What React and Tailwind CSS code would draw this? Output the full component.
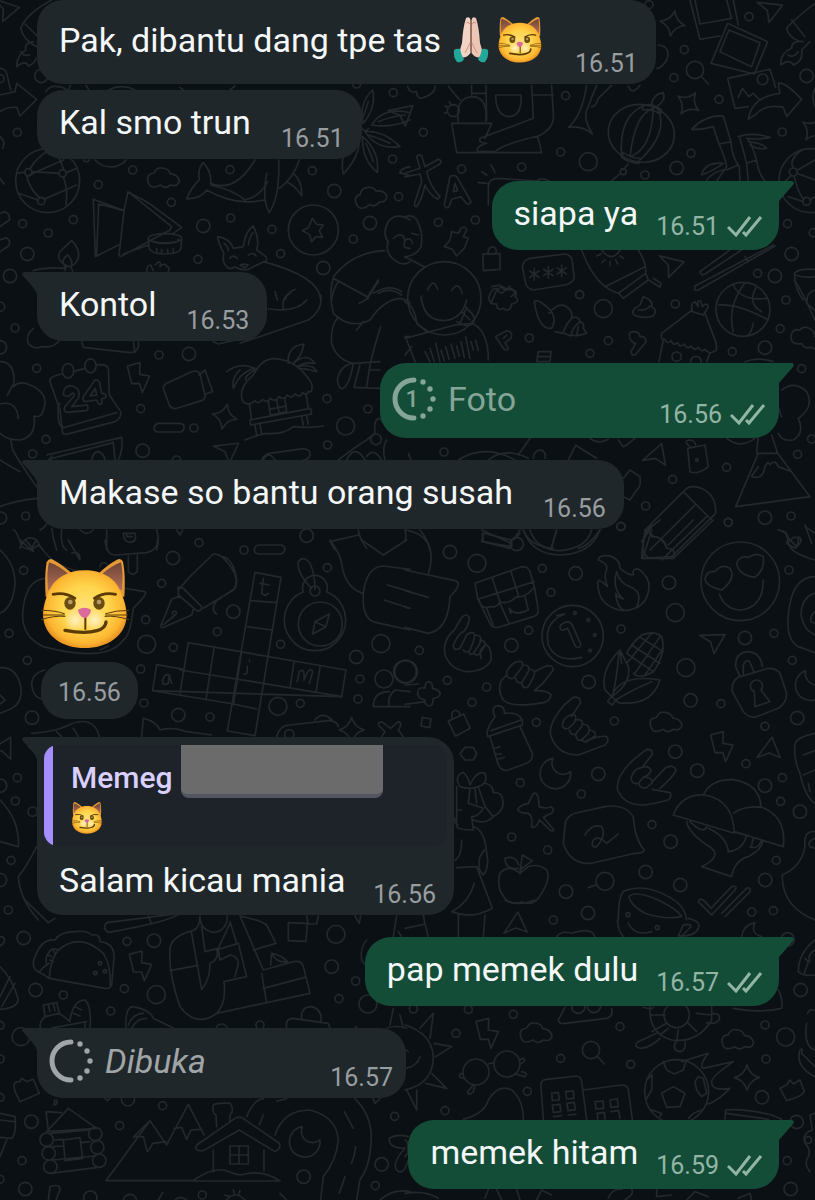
import React from "react";

// small doodles that come back several times, drawn around their own centre
const SHAPES = {
  cloud: "M-46 10Q-52 -14 -28 -16Q-20 -36 2 -30Q18 -26 20 -14Q44 -12 48 8Q44 26 22 20Q4 34 -8 20Q-40 36 -46 10Z",
  bolt: "M-35 -35L3 -45L2 -10L32 -5L10 45L2 18L-22 18Z",
  moon: "M-8 -45A46 46 0 1 0 45 -5A34 34 0 0 1 -8 -45Z",
  sparkle: "M0 -38Q8 -8 38 0Q8 8 0 38Q-8 8 -38 0Q-8 -8 0 -38Z",
  plane: "M-38 -20L38 -22L5 35L-5 0Z",
  search: "M26 0A26 26 0 1 0 -26 0A26 26 0 1 0 26 0M18 18L40 42",
  bag: "M-28 -14L22 -26L32 20L-16 34ZM-14 -18Q-16 -42 0 -42Q12 -38 10 -24",
};

// wallpaper pieces: x / y is the corner of the piece, all the rest in thirds of a pixel
const TILES = [
  {
    x: 0,
    y: 0,
    circles: [
      [52, 397, 12], [398, 510, 12], [295, 554, 12], [514, 607, 12], [68, 671, 12], [145, 699, 12], [220, 659, 12],
      [690, 509, 12], [937, 512, 12], [1196, 590, 12], [692, 654, 12], [816, 688, 12], [1060, 717, 12], [842, 761, 12],
      [594, 778, 12], [1180, 278, 12], [1178, 477, 12], [1070, 252, 12], [0, 236, 12], [124, 228, 20], [82, 762, 20],
      [30, 828, 20], [610, 678, 20], [1003, 573, 20], [1110, 669, 20], [970, 804, 20], [143, 542, 96], [940, 690, 75],
      [85, 517, 11], [188, 520, 11], [124, 603, 11],
    ],
    uses: [["cloud", 490, 535, 0], ["cloud", 1112, 592, -14], ["plane", 15, 30, 20]],
    paths: [
      "M155 0Q80 40 62 85Q70 120 110 140M75 72L112 108",
      "M100 125Q70 130 78 150Q50 165 50 200Q78 178 85 198Q105 190 108 175M62 155Q70 170 90 165",
      "M0 205Q15 205 20 220L32 270M0 285L45 275L50 250L110 298L60 348L50 322Q20 320 0 335",
      "M95 515L178 520M80 528Q90 570 120 594M190 530Q205 570 198 614M55 580L115 600M132 598L230 555M90 507Q110 470 150 450M192 510L170 455M50 520L76 516M198 518L232 505M88 525L190 480",
      "M0 410Q18 425 8 445M0 535L12 552",
      "M137 275Q150 255 175 260Q195 262 205 275M205 270L212 256M258 256L268 272M325 270Q365 250 405 270M540 262L552 272M690 270L705 258",
      "M285 480Q310 505 345 500Q370 492 378 480M250 480Q260 492 268 480",
      "M372 632L280 598L286 770L355 735M372 632L384 575L515 680L510 690L362 770L357 766L372 632M384 575L400 585Q430 598 450 612L545 682L520 700M290 765L296 612L372 632M370 762L445 735",
      "M445 715A50 14 0 1 1 545 715A50 14 0 1 1 445 715L447 745Q455 762 495 762Q540 760 543 745L545 715M456 718A40 10 0 1 0 534 718M470 745V756M485 748V760M503 748V760M520 745V756",
      "M560 597Q575 560 598 540Q592 505 610 488Q635 515 632 550Q705 580 765 480M560 597Q605 595 620 570Q690 610 760 605L795 600M632 555Q700 570 735 600Q780 590 803 545M800 520Q785 600 808 638Q840 590 836 480M838 565Q880 535 898 480M860 545Q890 560 905 588Q908 545 880 520",
      "M1090 370Q1075 310 1118 270Q1130 320 1090 370M1115 375Q1150 320 1230 338M1115 375Q1170 385 1230 360M1095 395Q1150 390 1200 440Q1130 450 1095 395M1088 410Q1140 455 1132 517Q1085 480 1088 410M1078 415Q1080 470 1030 522Q1020 480 1040 450M1135 365Q1170 350 1215 345M1105 405Q1140 415 1170 430M1085 385Q1100 400 1105 385M1098 430Q1115 465 1120 485M1090 350L1105 305",
      "M1200 520Q1200 505 1230 500M1200 518L1230 527",
      "M205 800Q165 780 180 755L215 722Q240 745 235 775Q225 800 205 800M195 800Q180 780 203 765Q222 785 212 800L218 813M195 812L198 800M100 812Q140 800 195 805",
      "M0 640L15 635Q32 645 28 660L0 680M0 720L20 713Q35 725 25 738L0 755",
      "M937 655L950 673L970 675L958 692L968 712L948 710L935 725L928 703L907 692L925 683Z",
      "M440 815Q440 795 452 795L460 812M465 795Q485 775 480 800Q495 785 500 800Q512 800 505 815",
      "M672 760Q655 730 653 710Q690 715 700 745L730 740Q735 695 760 678Q780 720 770 750L798 770Q805 785 785 788Q760 800 745 808Q720 812 705 800Q690 812 680 800Q665 785 672 760M672 730Q685 740 685 752M745 735Q750 705 760 698M690 775Q700 762 712 775M745 765Q760 755 768 768M720 795Q735 790 745 795L735 803ZM790 785Q960 830 962 900",
      "M1230 660Q1190 635 1165 665Q1145 700 1165 725Q1150 765 1200 790Q1220 795 1230 785M1180 715Q1210 690 1215 725Q1205 745 1230 745M1000 830Q1060 755 1155 752M1000 835L1100 890M995 900Q1000 865 1015 845M1100 895L1135 840M1135 880Q1170 860 1205 885",
      "M825 875L832 900M855 900Q860 880 885 868",
    ],
  },
  {
    x: 405,
    y: 0,
    circles: [
      [55, 397, 12], [170, 507, 12], [350, 501, 12], [467, 456, 12], [482, 287, 12], [720, 525, 12], [858, 460, 12],
      [838, 149, 12], [1032, 50, 12], [942, 298, 12], [1132, 396, 12], [100, 667, 12], [211, 660, 12], [732, 14, 12],
      [807, 233, 12], [1148, 671, 12], [1058, 820, 12], [524, 884, 12], [1225, 698, 12], [550, 485, 27], [815, 504, 20],
      [1205, 228, 20], [1160, 762, 20], [1110, 828, 20], [1073, 238, 16], [145, 332, 18], [1218, 542, 96], [655, 515, 9],
      [1165, 516, 12], [1205, 604, 12], [118, 895, 110],
    ],
    uses: [
      ["sparkle", 803, 70, 10], ["sparkle", 850, 310, 35], ["sparkle", 1225, 388, 35], ["search", 870, 210, 0],
      ["plane", 1092, 32, 8], ["plane", 795, 797, 15], ["bag", 258, 782, 12], ["plane", -10, 345, -10],
    ],
    paths: [
      "M8 260Q12 280 35 275Q35 295 50 295Q80 285 88 270L90 258M130 258Q150 285 165 300M200 256V285M243 256L245 360M200 280H243",
      "M160 365Q150 290 205 290Q250 295 242 365M140 370H260L240 415M140 370L155 458H410L398 410M272 285H348Q352 350 310 350Q272 345 272 285M380 256L385 355L225 415Q220 430 245 430Q210 440 218 455H270Q300 430 400 408Q450 385 445 340L440 256M385 285H445M120 318L128 322M118 340L128 336M133 305L138 313",
      "M545 256Q530 350 490 382Q530 375 562 402Q530 350 550 320Q560 290 575 256M560 320Q572 322 580 295Q600 275 620 256",
      "M610 390A98 85 10 1 1 808 410A98 85 10 1 1 610 390M715 318Q640 350 650 470M745 325Q690 340 675 470Q740 450 745 325M760 330Q790 400 705 480M713 318Q740 305 770 330L765 342Q740 325 713 330ZM655 458Q680 475 705 475L702 490Q670 488 650 472ZM740 312Q745 282 775 278Q785 300 755 320M670 492L655 508M645 522L620 543",
      "M760 135Q800 140 785 180Q770 205 755 205M670 258Q680 285 700 262L705 256",
      "M855 0L885 118L945 108M985 0L1000 75M870 0L885 72L980 55L965 0M968 70L1088 125L1048 222L918 190ZM972 90L1065 128L1040 200L945 155Z",
      "M968 235L1095 208L1112 262M968 235L990 325L1030 320M1000 292L1012 265L1032 290L1045 280L1065 300M1030 358Q1040 290 1125 280L1120 250Q1140 245 1190 298L1145 350L1135 322Q1080 310 1050 345Z",
      "M1230 10Q1165 60 1145 85Q1150 110 1180 122M1160 60L1200 110M1195 125Q1160 120 1160 145Q1125 160 1128 195Q1155 175 1165 195Q1195 185 1190 150L1215 125M1150 165Q1165 175 1180 155M1230 265Q1218 290 1230 320",
      "M860 388Q900 345 955 348L978 425L942 432L925 380Q890 390 860 388M942 432Q960 470 965 500L935 543M978 425Q980 470 1003 500L1005 543M1005 415L1025 490L1055 480Q1040 430 1030 420M1000 410Q1040 395 1095 412Q1060 420 1025 415M1030 425Q1075 430 1085 445Q1060 450 1035 435M965 510L1000 495M1025 490L1030 543M1055 482Q1060 520 1080 543M890 525Q900 485 955 490Q930 510 890 525M905 540Q925 515 955 510",
      "M1165 503Q1150 480 1190 450M1175 520L1230 540M1168 530Q1180 580 1196 598M1140 545L1160 525M1150 590L1195 605M1215 600L1230 590M1178 510L1230 480",
      "M0 520L45 505L35 470Q40 460 50 468L60 500L100 478Q112 480 105 492L65 515Q75 560 105 590L98 598Q70 580 60 555Q50 600 35 620Q25 620 30 605L50 545L45 522L0 530",
      "M118 615L135 530Q145 522 155 530L198 605Q192 618 182 608L168 590L140 598L132 620Q122 628 118 615ZM145 575L158 572L150 550Z",
      "M230 515L245 525M258 495L270 518M220 548L245 550M250 615V560Q250 535 280 535L400 543M395 543Q410 530 432 543",
      "M0 650Q30 640 40 670Q55 700 48 740Q35 765 10 768L0 772M0 720Q20 710 22 730M20 700L40 705M0 770L58 800",
      "M118 740L135 720L140 695L160 700L168 685Q180 675 185 690L175 710L190 715L178 745L155 768L142 748Z",
      "M68 870Q85 830 98 868M140 872Q160 840 172 880M50 888L48 900",
      "M375 775L480 762Q500 765 502 785L508 835Q500 850 480 855L385 870Q365 865 362 850L352 800Q355 780 375 775ZM388 805V840M374 813L402 832M402 813L374 832M430 800V835M416 808L444 827M444 808L416 827M470 795V830M456 803L484 822M484 803L456 822",
      "M530 750Q570 860 640 880L722 820Q725 790 700 750M590 750Q620 790 645 750M575 768L588 762M590 788L600 780M615 798V785M638 792L632 780M655 775L645 768M640 878L655 895L730 840L722 820M728 838L765 862L768 850L745 835M600 860L720 800",
      "M975 750L885 815Q890 830 900 822L1010 750M1105 735L870 858Q865 875 880 870L1110 738M1020 770L1030 785",
      "M1230 808Q1180 805 1168 820Q1170 870 1195 900M1170 825Q1200 835 1230 830",
      "M260 860L285 855L295 868L320 865L330 880L318 890",
    ],
  },
  {
    x: 0,
    y: 300,
    circles: [
      [45, 84, 12], [0, 142, 20], [477, 165, 12], [567, 162, 20], [110, 205, 12], [981, 296, 12], [422, 326, 12],
      [582, 384, 12], [1104, 327, 12], [138, 418, 12], [98, 462, 12], [983, 435, 12], [1037, 378, 27], [428, 452, 20],
      [1128, 418, 16], [77, 648, 12], [597, 728, 12], [2, 654, 18], [920, 707, 20], [0, 20, 14], [530, 480, 12],
    ],
    uses: [["bolt", 417, 233, 0], ["sparkle", 674, 350, 12], ["plane", 680, 455, -5]],
    paths: [
      "M100 85Q75 105 85 130Q100 150 125 140Q160 145 178 122M245 125L250 142L390 158Q420 155 415 125M400 125L405 158M640 125L655 132L700 122",
      "M962 -15Q970 30 925 60L720 130M805 27Q890 38 920 0M850 25Q845 -10 870 -20",
      "M185 222Q145 230 150 245L180 330L188 400Q195 405 210 400L345 365Q365 355 362 335L328 285L325 205Q320 190 288 195M220 215L255 205M180 310L175 320Q170 385 195 382L350 338M190 200A16 20 0 1 1 218 225A16 20 0 1 1 190 200M258 185A16 20 0 1 1 285 210A16 20 0 1 1 258 185",
      "M190 285Q190 255 215 258Q245 265 235 295L215 320L262 315Q268 330 258 332L200 337Q188 332 195 320L222 288Q225 270 205 290ZM250 290L285 240Q300 240 300 255L305 280Q320 280 318 292L305 297V312Q295 318 290 300L255 305Q245 300 250 290ZM270 288L290 285L286 265Z",
      "M500 250L575 215Q595 210 600 222L615 285Q618 295 605 302L530 325Q515 328 508 315L490 265Q490 255 500 250ZM597 225L615 210L638 275L615 283",
      "M680 215Q720 185 765 205Q720 215 700 265Q695 230 720 210M765 210Q730 230 738 240M725 290Q720 260 760 225Q790 165 840 178Q895 185 935 250Q940 280 925 275Q920 290 908 278Q900 295 885 282Q875 298 862 285Q850 302 838 290Q825 308 812 295Q800 312 788 298Q775 315 765 302Q745 318 740 310Q725 310 725 290M865 190Q860 140 912 132Q905 170 880 190Q920 155 945 190Q920 185 890 200Q940 190 950 215Q915 205 895 205",
      "M748 310L755 360M918 280L925 325M750 360L932 325L935 342L752 375ZM805 305L812 345L860 335L855 295M830 300L838 340M808 328L858 318M765 375L770 405M780 372L785 402M905 350L910 375M920 348L925 372M735 420Q770 405 800 400Q850 405 880 380Q930 385 970 378",
      "M475 370H540Q555 372 552 384Q550 395 540 396H475Q462 395 462 383Q464 372 475 370Z",
      "M0 185Q45 185 42 250L22 285M40 260Q60 240 90 255Q150 280 130 330Q125 355 102 348Q110 410 60 420Q20 420 0 400M0 312Q50 300 55 355M32 418L38 450Q60 490 110 560M0 480Q30 500 60 515M0 620Q50 600 110 595",
      "M140 465L365 412Q370 450 355 480M145 478L340 428L345 480M275 480Q280 455 295 455Q310 460 315 478M155 468L150 482",
      "M785 480Q790 465 810 460L910 446Q935 450 930 465Q925 480 910 480M790 480Q805 450 825 480",
      "M1000 -65Q985 -20 1000 40Q1050 90 1110 60Q1150 0 1200 -5Q1225 0 1230 10M1015 50Q990 80 995 130Q1010 180 1060 190L1140 185M1142 80Q1120 150 1110 195M1000 -65L1105 -8L1135 -55M1105 -5L1078 10M1070 90L1090 65M1120 -20Q1170 -50 1205 -25",
      "M1060 190Q1020 195 1012 240Q1015 270 1030 265Q1050 250 1060 190M1080 195L1062 262L1140 265M1110 197L1100 260M1140 210H1110",
      "M1015 480Q1060 445 1100 420L1125 400Q1120 355 1140 355L1160 380M1040 480Q1065 430 1095 480M1100 470Q1120 440 1145 480M1160 420Q1145 440 1155 480",
      "M120 690Q140 680 145 660M155 685Q160 720 170 750M185 690Q180 740 200 750M240 690Q260 710 280 690M320 690V750M470 690Q480 720 470 750M370 700H405Q412 725 390 727Q370 725 370 700M380 700V710H396M65 740Q50 690 40 690M60 745Q75 700 110 720L90 750M65 740Q90 755 115 735L130 750M530 690L540 705L548 690M1075 690Q1080 720 1100 745M1075 705L990 725L1005 750",
    ],
  },
  {
    x: 405,
    y: 300,
    circles: [
      [524, -16, 12], [811, 12, 12], [1143, 0, 12], [1126, 86, 12], [982, 155, 12], [1190, 206, 12], [373, 114, 12],
      [610, 122, 12], [555, 160, 12], [117, 456, 12], [965, 502, 12], [803, 538, 12], [722, 618, 12], [970, 667, 12],
      [1158, 648, 12], [648, 680, 12], [1178, 463, 12], [1220, 417, 12], [595, 26, 27], [1080, 143, 20], [1080, 653, 20],
      [1014, 28, 81], [815, 170, 14], [873, 185, 16], [876, 480, 4],
    ],
    uses: [["plane", 755, 472, -40], ["cloud", 1205, 115, 20]],
    paths: [
      "M50 0Q60 60 115 62Q170 60 185 0M155 65Q185 85 205 70Q215 50 190 30L180 20M165 70L185 22M170 35L195 60",
      "M0 5Q30 20 35 70L65 95M0 115L150 75L200 70Q250 90 250 180M5 120L30 185M0 165L20 140M60 155L75 185M75 145L88 185M92 130L105 185M108 150L118 182M122 140L132 178M138 132L150 175M155 138L163 168M168 125L178 172M182 110L195 175M198 125L205 150M212 120L220 152M0 110L20 110",
      "M260 5L275 -30L290 -20L315 -42M252 -10Q265 -45 280 -30Q290 -50 305 -30Q345 -35 330 -10Q350 5 320 12Q315 40 295 25Q275 35 275 12Q250 15 252 -10Z",
      "M275 108L305 92Q325 95 318 115L300 128L310 145Q305 155 295 145L275 115Q270 110 275 108ZM295 115L305 105",
      "M388 5Q395 -5 425 20Q460 50 440 85Q400 90 388 5ZM432 40Q460 5 485 20Q505 35 500 55Q480 75 475 100L450 95M500 55Q520 45 525 65Q500 85 498 108L475 100M525 65Q540 70 535 85L545 100Q520 110 498 105M520 80L515 108",
      "M700 50Q675 45 688 25Q700 20 705 15L715 -10Q745 0 740 20Q760 30 745 48Q725 55 700 50M700 30Q725 32 735 18M415 155H438L435 185H395L400 155ZM400 170H435",
      "M675 115Q668 95 685 95Q705 95 705 110L715 110Q728 120 720 130L690 165Q680 168 678 155L692 130Q680 128 675 115Z",
      "M862 30L770 100Q765 120 780 118Q785 135 798 122Q805 140 818 128Q825 145 838 132Q848 150 858 138Q868 155 880 142Q890 158 900 148Q915 165 925 155Q940 155 932 125L900 40M862 35Q855 10 870 5L880 20Q875 -5 888 5L892 20Q905 5 910 20L895 45ZM775 120L762 185M915 160L905 185",
      "M940 15Q1000 10 1090 60M1020 -52Q965 20 985 95M985 -45Q1010 5 1085 -5M1045 70Q1040 100 1025 108M1055 -40Q1025 10 1070 35",
      "M1130 270Q1170 240 1205 275Q1230 320 1180 355Q1200 400 1165 420Q1130 425 1120 400M1130 350L1120 320M1230 60Q1195 -20 1168 -60M1230 -30Q1205 -25 1205 10L1230 30M1020 185Q1060 170 1105 185",
      "M855 440Q835 425 850 420Q870 420 872 435M848 445L900 435L910 500Q880 525 855 515ZM960 410Q1000 450 1050 415M1060 410L1055 460H1118L1100 405M1060 460L992 620L1215 590L1115 455M1040 528L1060 500M1040 530Q1075 540 1080 500Q1090 480 1095 495Q1110 475 1120 500L1160 515",
      "M160 480Q240 430 330 480M250 480Q300 440 370 475M375 415L340 465M385 475Q385 450 410 450Q425 460 420 475M10 460L18 480M490 480L512 436L575 475M660 438L690 415M640 420L655 440M555 415Q580 435 610 418",
      "M655 535L675 510L705 530Q710 560 695 570L675 600L655 590",
      "M835 575Q850 555 880 562Q935 580 932 640L800 770M835 575L720 690L710 775L805 770M835 575L920 660M870 615L735 750M905 650L770 780M740 690L715 770M720 690Q740 700 745 710Q775 710 785 740",
      "M0 690Q65 700 75 750M235 700L320 720V740L230 725ZM355 690Q375 740 445 745M585 690Q550 740 520 745M455 690L440 740M345 690L325 720M1120 690Q1160 700 1145 730L1170 745Q1200 720 1180 710M1200 680L1230 700",
    ],
  },
  {
    x: 0,
    y: 540,
    circles: [
      [71, 91, 12], [27, 280, 12], [82, 361, 12], [485, 130, 12], [437, 239, 12], [520, 322, 12], [422, 387, 12],
      [432, 489, 12], [652, 275, 12], [842, 313, 12], [982, 83, 12], [1080, 417, 12], [1074, 477, 12], [901, 490, 12],
      [630, 531, 12], [52, 713, 12], [46, 783, 12], [33, 961, 12], [25, 1110, 12], [732, 30, 12], [519, 54, 20],
      [700, 215, 20], [535, 525, 20], [96, 533, 20], [1069, 351, 20], [440, 313, 27], [834, 499, 27], [1143, 311, 27],
      [0, 737, 20], [0, 1020, 20], [945, 153, 15], [961, 252, 66], [1152, 417, 27], [1215, 395, 34], [868, 583, 14], [98, 815, 14],
    ],
    uses: [["sparkle", 1055, 570, 0], ["plane", 10, 630, -30]],
    paths: [
      "M0 30Q45 70 45 130Q40 200 0 220M205 0L240 60M215 40Q240 30 240 60M60 0L100 35Q90 10 75 0M110 0Q150 80 245 95M315 0Q320 45 345 45L440 38Q475 30 472 0M385 48V95Q398 110 412 95V45M300 80Q305 60 320 72",
      "M375 145L435 155Q445 160 400 205Q390 290 370 300Q320 370 130 320Q65 290 68 220Q75 120 135 115M300 330L325 318",
      "M535 150L570 110L640 42Q665 38 695 85Q720 120 700 150L610 205M665 50Q690 50 705 95Q715 125 705 145L650 182Q630 210 650 222M535 150Q530 135 550 145L605 200Q605 215 590 212L535 165ZM540 168L515 178L482 258Q485 268 500 258L575 225L580 208M490 255L525 225A6 6 0 1 0 518 222",
      "M765 97L843 112L765 587L682 573ZM755 182L830 188M742 260L815 270M565 308L540 460M642 325L618 478M565 308L1038 390L1025 470L458 452M882 368L870 443M960 382L948 458",
      "M470 374L552 388M540 390L790 430L1025 470M725 335L700 495M470 374L458 452L700 492L770 507",
      "M790 115L785 160Q795 170 805 160M780 130L808 135M742 378V395Q740 405 732 402M748 360L749 364M488 425Q490 400 508 405L505 430Q485 440 488 420M508 405L515 430M892 425L898 395Q915 380 912 420Q930 375 938 395L928 430",
      "M910 155A37 37 0 1 1 980 155A92 92 0 1 1 910 155M935 145Q890 100 895 65Q910 45 930 70Q945 100 945 148M988 222L978 260L938 282L945 245ZM945 245L978 260",
      "M0 383Q50 380 62 440Q70 490 30 508L0 520M0 465L15 480L0 492M135 390Q95 400 95 435Q100 475 130 478",
      "M95 580Q165 575 200 558Q280 520 298 590M170 575L185 590M220 565L235 590M425 590L430 535Q470 545 480 570Q520 560 560 575L635 585M0 780Q60 840 55 920L0 905M110 640L85 620M110 920Q80 980 55 1010Q60 1080 115 1140",
      "M830 590Q840 555 870 555L985 542Q1010 540 1015 560M945 540Q970 510 1000 545M1135 550L1145 545L1172 565L1195 545Q1210 550 1195 570L1210 590M1135 555L1155 575L1145 590",
      "M775 15H845Q855 20 855 30Q850 42 840 42H775Q762 40 763 28Q765 18 775 15ZM990 0Q1020 40 1025 70Q1035 145 1090 160M1085 0L1150 45L1220 0M1090 160Q1100 80 1150 78L1230 88M1090 160Q1085 240 1130 248L1230 270M1162 135L1230 155M1152 180L1230 205",
      "M1168 500Q1160 470 1185 450L1230 455M1120 500Q1120 455 1168 455M1120 500H1230",
    ],
  },
  {
    x: 405,
    y: 520,
    circles: [
      [412, 145, 12], [438, 217, 12], [371, 331, 12], [43, 391, 12], [127, 481, 12], [245, 501, 12], [201, 547, 12],
      [394, 607, 12], [628, 603, 12], [648, 327, 12], [648, 19, 12], [970, 7, 12], [1152, 150, 12], [1107, 340, 12],
      [1162, 421, 12], [948, 551, 12], [1080, 619, 12], [1023, 731, 12], [1132, 773, 12], [1127, 844, 12], [1114, 1021, 12],
      [741, 914, 12], [346, 788, 12], [529, 822, 12], [320, 951, 12], [428, 990, 12], [1040, 1176, 12], [1105, 1172, 12],
      [135, 96, 20], [512, 160, 20], [792, 188, 20], [319, 376, 20], [551, 486, 20], [857, 541, 20], [1020, 354, 20],
      [1177, 594, 20], [811, 695, 20], [877, 752, 20], [1080, 797, 20], [1185, 875, 20], [580, 762, 20], [797, 965, 20],
      [722, 1056, 20], [483, 1115, 20], [826, 1095, 20], [1081, 1080, 20], [549, 1179, 20], [216, 130, 27], [811, 278, 27],
      [843, 443, 27], [600, 1084, 27], [1006, 184, 118], [503, 348, 92], [510, 279, 4], [335, 72, 20],
      [550, 300, 4], [569, 345, 4], [555, 392, 4], [669, 1184, 6], [3, 455, 34],
    ],
    uses: [
      ["plane", 922, 366, 0], ["cloud", 783, 608, 0], ["bolt", 952, 680, 0], ["moon", 452, 760, 0],
      ["plane", 1095, 695, -52], ["bag", 160, 612, -12], ["moon", 1218, 495, -10],
    ],
    paths: [
      "M0 150L150 182Q175 190 135 230Q130 330 70 340L0 322M0 212L70 232M0 262L15 265M45 30Q95 90 70 160M0 30Q5 50 0 60",
      "M0 495L40 492M40 510Q45 500 60 505Q60 485 72 485Q85 490 82 505Q105 510 106 522Q100 535 85 535Q85 558 72 558Q58 555 60 540Q35 535 38 515M0 553L60 545M52 592L78 597L74 623L48 618ZM165 702L180 682H205L215 702L205 720H180Z",
      "M210 190L350 140Q370 140 375 155L388 200L400 270Q400 285 385 290L280 322Q260 325 255 310L218 235ZM218 238L388 185M262 175L285 245M318 155L340 225M222 240Q230 270 255 260Q275 265 285 245Q310 255 335 230Q360 235 385 205M245 265L265 315M285 250L312 310M312 265Q330 290 370 270L360 230M312 265L318 280",
      "M580 120Q580 105 610 107Q645 115 645 145Q670 165 685 165Q680 145 700 147Q735 170 732 205Q725 268 655 272Q580 262 578 190Q578 175 590 185L608 200Q595 170 605 150Q610 130 580 120M635 155Q620 205 655 237Q635 230 632 220Q635 260 655 270M635 155Q645 190 675 200Q715 215 695 262",
      "M454 287Q465 282 480 282M480 282Q415 305 430 375Q455 430 530 412M465 320Q470 308 490 305Q500 308 504 320L527 372Q528 382 518 382Q512 382 508 372L488 325L475 330Q465 330 465 320Z",
      "M900 178Q905 150 930 155Q950 130 975 145Q995 175 950 210Q905 200 900 178ZM995 130Q1005 105 1030 112Q1055 95 1075 110Q1080 150 1050 172Q1000 165 995 130ZM943 222Q960 270 1010 270Q1075 260 1075 180",
      "M710 65L740 20L765 0M740 15Q710 40 712 115L805 115L925 0M740 50Q770 45 785 85Q810 85 808 105M712 85Q720 110 735 115M865 0L790 75",
      "M230 30L320 70M232 40L235 65L315 85M355 30Q380 105 470 105Q560 100 585 30M375 30Q395 90 465 92Q545 85 560 30M455 30L440 80M345 40L330 55",
      "M148 330L170 292Q185 278 193 292Q192 315 178 333M148 330Q112 360 120 405Q140 455 195 455Q245 450 258 420Q260 385 245 375Q232 378 225 395L228 415M178 333Q160 340 145 375Q145 395 165 385L178 360Q185 335 205 338Q215 345 195 390Q185 402 175 390M208 345Q238 345 222 375L205 400Q195 408 192 395M225 360Q250 365 235 385L222 403Q212 408 208 400",
      "M305 455Q325 420 350 425Q358 435 345 450L325 475Q312 480 305 465ZM355 435Q378 435 370 455L350 488Q335 492 332 475M375 447Q395 450 385 472L370 500Q355 510 350 490M388 455L425 437Q445 435 445 450L412 492L388 512Q430 510 438 525Q435 545 415 548Q320 565 295 540Q275 510 290 480L305 465",
      "M665 400Q680 370 710 345Q750 330 770 350Q785 400 745 455Q700 480 685 460M665 400L745 455M680 375L765 430M705 352L775 395M740 340L665 430M765 350L690 460M775 385L720 465M645 390Q585 450 600 510L620 530Q680 490 670 440ZM645 390L650 430M620 530Q645 460 765 480Q740 560 640 548ZM642 400Q635 480 622 530M740 485Q680 510 632 540M618 530L632 540L622 555L608 545Z",
      "M1005 470L992 440Q990 395 1035 395Q1070 405 1072 440M1015 465V435Q1030 405 1042 445L1048 458M1000 472L1090 445Q1115 445 1125 460L1145 520Q1145 550 1120 565L1050 592Q1025 590 1015 575L982 515Q978 485 1000 472ZM1048 515A18 18 0 1 1 1068 510L1095 545L1050 560Z",
      "M1160 230Q1180 170 1230 170M1160 230Q1130 350 1180 380L1230 398M1230 220Q1190 230 1188 285Q1195 330 1230 345M1230 275Q1215 285 1218 305L1230 310",
      "M270 590Q255 560 280 557Q300 560 298 580Q340 575 352 600V615L248 650Q240 630 270 590M258 632L348 600M255 650L280 735Q290 755 310 750L365 730Q385 720 382 700L345 620M270 685L285 680M272 702H290M278 718L298 712",
      "M478 555L505 532Q525 528 527 548L500 590M478 555Q430 610 437 645Q455 705 520 705L600 675Q615 662 605 650Q590 645 545 662M505 582Q520 590 505 612L490 625Q475 630 472 615Q475 590 505 582M510 600Q540 595 530 620L512 642Q498 648 493 630M532 612Q560 615 550 640L530 660Q515 665 512 645M552 630Q575 632 570 648L545 665Q535 668 530 658",
      "M690 715L725 688Q745 688 742 703L712 742M690 715Q630 770 638 810Q665 870 750 850L790 840Q802 830 795 818L742 808M712 742Q730 735 738 750Q735 765 715 772L700 790Q682 795 678 775Q685 745 712 742M718 772Q740 770 742 788L725 803Q708 808 702 792M742 785L780 745Q805 730 813 750Q810 765 765 805",
      "M385 820Q402 815 402 860Q425 868 438 860Q450 868 442 878L415 892L447 930Q440 938 430 925L403 900Q395 925 380 922Q385 890 370 880Q345 880 338 870Q342 855 370 850Z",
      "M805 885Q830 820 900 825Q985 840 988 940ZM895 825Q915 780 980 778Q1065 790 1068 860M985 880Q1020 855 1070 862Q1145 890 1135 980L988 935M845 905Q850 940 920 985Q950 1010 890 1040L980 1070Q990 1020 1030 1010Q1070 990 1075 960M855 905Q895 945 905 920M910 925Q965 950 970 995Q1015 990 1025 945M1035 980Q1060 990 1070 960M1040 975L1045 955",
      "M480 920Q480 890 510 880L600 860Q660 850 685 890Q690 960 718 990Q715 1000 690 1000L560 1030Q495 1035 475 970ZM540 945Q560 910 590 920Q605 945 575 980Q555 985 565 960Q580 945 605 970L640 942",
      "M345 1060Q310 1030 285 1060Q270 1110 310 1145Q335 1155 350 1145Q380 1160 400 1135Q440 1080 425 1050Q400 1030 370 1040ZM345 1060L352 1005L382 1022L345 1050M340 1045Q300 1050 300 1015Q330 1005 342 1035M550 1103L572 1095",
      "M165 800Q145 770 175 757Q190 770 195 795Q215 750 240 760Q250 790 220 800Q195 810 165 800M220 800L240 860L265 890Q300 870 293 840Q290 815 265 818Q265 795 240 790M155 800V920Q160 930 205 930L200 890Q220 890 235 865L190 850L195 805M210 805L215 850M155 870H170M205 900Q240 915 265 890M160 915Q145 910 150 895M205 920Q240 930 245 1000Q255 1040 235 1065Q215 1050 225 1010L238 990M155 1043L215 1040L262 1165Q200 1200 140 1175Q190 1150 208 1090M170 960Q170 1010 150 1020",
      "M640 1200Q640 1120 660 1112Q720 1090 790 1130Q840 1155 845 1200M672 1130Q690 1110 760 1140Q820 1170 830 1190Q780 1200 720 1180Q675 1155 672 1130M880 1145Q885 1130 900 1145L918 1165L980 1100Q1000 1095 990 1110L920 1185ZM950 1180L1025 1105Q1040 1100 1035 1115L960 1190",
      "M1230 640Q1180 650 1170 670Q1165 720 1185 760Q1200 830 1230 850M1195 705L1230 692M1195 765L1230 750M1230 935Q1195 930 1200 980Q1190 1040 1132 1065Q1130 1160 1230 1200M1230 955Q1205 965 1215 980L1230 985M1210 790L1215 815",
      "M1120 30Q1150 35 1145 50L1175 80Q1190 50 1165 52L1150 68Q1155 100 1230 120M1200 15L1220 70",
    ],
  },
  {
    x: 0,
    y: 900,
    circles: [
      [381, 124, 12], [373, 266, 12], [190, 285, 12], [332, 333, 12], [1067, 243, 12], [1017, 296, 12], [780, 375, 12],
      [0, 376, 12], [0, 477, 12], [488, 617, 12], [359, 677, 12], [66, 782, 12], [0, 838, 12], [1184, 649, 12],
      [1126, 857, 12], [607, 885, 12], [71, 114, 20], [462, 122, 20], [107, 270, 20], [995, 200, 20], [63, 410, 27],
      [469, 284, 27], [1008, 103, 27], [1104, 312, 27], [94, 665, 20], [76, 867, 20], [911, 830, 20], [1145, 793, 20],
      [271, 893, 20], [384, 598, 20], [300, 190, 5], [286, 219, 5], [315, 214, 5], [0, 592, 12], [390, 903, 20],
      [140, 719, 20], [146, 760, 20], [151, 800, 20], [286, 702, 20], [292, 742, 20], [298, 782, 20], [665, 390, 18],
    ],
    uses: [["bolt", 423, 198, 0], ["moon", 915, 725, 0]],
    paths: [
      "M120 218Q90 205 105 170Q125 115 165 120Q180 95 225 95Q260 90 275 105Q300 100 300 125Q345 130 342 175L335 255Q330 268 315 265L148 235L120 218M148 235Q150 180 175 150Q240 95 310 160Q335 200 330 255M148 190Q130 200 118 215M175 150Q155 140 145 160Q135 170 140 195M160 150L165 160M145 165L155 170M150 180L160 185M75 0L145 68L165 55",
      "M320 68L540 40Q510 65 325 97Q305 85 320 68M445 48L455 72",
      "M600 48Q600 90 640 97Q680 95 682 48M578 92Q510 110 510 150Q505 220 540 320Q590 385 650 340L930 280L910 200Q905 180 880 185L790 210L720 48Q780 60 800 75L828 130L760 150M578 92Q600 85 600 48M574 95L605 268Q630 240 630 190Q660 175 650 150L715 130L740 230L672 245Q680 310 650 340M605 80L615 155L655 145L690 70M510 212L590 197M655 150L660 180L690 165Q715 170 715 190L705 230M690 65L710 130M785 220L800 308M790 265L915 232M812 195L815 160Q830 190 862 185M862 185Q845 165 815 160",
      "M865 68L922 70L918 124L865 122ZM920 48L925 72H950L955 48M1065 48L1078 70L1082 48M1190 48L1180 110M1195 95L1205 110",
      "M1100 120Q1080 140 1085 180L1100 200",
      "M0 110Q20 110 10 130L0 138M0 200Q40 240 55 300Q50 325 0 328M0 290L30 230M5 320L45 250",
      "M130 315L170 308L178 340L135 350ZM145 315L150 335M160 312L165 332M135 350Q115 370 122 384M175 340Q195 350 210 365M210 360Q220 300 255 300Q275 315 270 384M225 320L245 330M220 340L240 348M155 384L260 365M255 370V384M378 384Q375 320 400 320Q450 330 460 355L520 384M385 375Q400 340 430 340M395 384Q410 355 440 355",
      "M860 384Q855 355 880 355L985 370L990 384M905 360Q900 320 935 320Q970 330 962 368M1180 325L1170 375M1200 345L1210 384M1160 384Q1190 375 1220 384M1065 384L1070 380",
      "M42 560Q40 545 60 545L65 535L80 545L100 538L118 580L60 605L45 575ZM0 640L45 650Q50 700 35 715L0 712M0 660L42 665M20 720L0 770",
      "M140 695L205 625L290 685ZM145 692L138 635L185 638M165 600L162 615Q175 615 170 600M152 700L270 690M158 740L190 738M158 780L285 768M150 820L290 803M190 720L240 713L248 775L195 782ZM245 728L270 725M160 720L188 718",
      "M318 842L450 662L500 735L565 613L612 705M318 842H585M404 710H430L442 755Q455 740 458 730L498 725M522 685L545 682L560 718Q568 700 572 690L600 688M400 712L450 662",
      "M590 735Q580 755 610 752L718 690L825 755Q845 745 838 730L725 652H710ZM640 750V815M792 750V812M650 680L648 645Q635 640 640 615Q650 608 690 610Q705 630 690 645V665M690 738H745V792H690ZM717 738V792M690 765H745M582 840Q640 800 680 812Q720 830 735 822Q790 810 840 843H585",
      "M740 650Q760 600 790 596M790 645L778 675M825 705Q850 630 930 630Q1010 650 1015 720Q1010 780 970 830L962 900M1065 596Q1120 650 1113 730Q1110 800 1080 840L1070 900M1033 635L1060 685M1067 740Q1065 765 1055 790M1035 830L1018 880",
      "M1225 710Q1190 700 1168 715Q1165 745 1215 745Q1175 790 1190 810Q1210 830 1225 780M1120 596L1125 610L1140 596M830 604L860 596M315 596L322 602L330 596",
      "M145 900L150 860Q180 850 180 870L168 900M675 885L690 890M700 870L705 885M720 872L715 885M680 900Q705 870 735 900M840 880L860 900M475 900L488 878M1140 900Q1180 865 1230 875M525 900Q540 885 560 900",
    ],
  },
  {
    x: 405,
    y: 900,
    circles: [
      [445, 60, 12], [325, 343, 12], [153, 400, 12], [190, 328, 12], [645, 380, 12], [467, 475, 12], [677, 493, 12],
      [367, 574, 12], [120, 632, 12], [1080, 375, 12], [1083, 477, 12], [1147, 782, 12], [1187, 270, 20], [1071, 592, 20],
      [1175, 666, 20], [1157, 867, 20], [1142, 411, 27], [25, 327, 12], [757, 83, 6],
      [1148, 118, 20], [213, 516, 39], [306, 492, 39], [520, 320, 20], [567, 318, 20], [815, 575, 96], [815, 345, 38], [1210, 720, 10],
    ],
    uses: [
      ["cloud", 393, 400, 0], ["cloud", 998, 420, 0], ["bolt", 248, 400, 0], ["search", 558, 450, 0],
      ["plane", 335, 80, -55], ["sparkle", 1026, 533, 0],
    ],
    paths: [
      "M0 375Q80 400 85 470Q85 550 0 570M45 385L85 340L75 415M88 430L140 440L92 470M80 520L125 565L62 550M35 570V630L5 570M0 450Q5 450 10 455M0 505Q35 500 45 470",
      "M250 492L268 488M175 520Q160 520 165 532L178 535M205 555L188 575Q190 590 205 575L210 555M343 480L355 475Q365 485 345 492M330 522L360 530Q372 520 350 515",
      "M175 658Q240 640 250 600Q280 550 320 570Q355 600 355 658M415 658L408 560Q405 540 425 538L515 528Q528 530 530 545L545 658M535 570L650 555Q668 555 670 570L682 658M440 580L460 577L463 600L442 602ZM482 575L505 573L507 595L485 597ZM442 615L465 613L467 635L445 637ZM486 610L508 607L511 629L489 632ZM446 650L470 647M490 645L513 643M570 605L594 603L596 625L573 627ZM615 600L637 597L640 620L618 622ZM575 640L598 637L600 658M618 635L641 632L645 655M578 640V658",
      "M735 320Q730 400 800 420Q880 430 920 360V320M785 370L740 395M850 370L875 395M790 385L765 405M820 390L815 425M780 345L735 345M875 340L920 345M755 400L700 425Q680 440 710 445Q740 440 765 415M920 340Q950 340 942 360Q930 375 905 368M812 425Q800 450 825 455Q845 450 840 425M985 325Q1060 340 1130 325Q1135 300 1120 270M715 322Q740 330 745 322M480 322L460 360Q465 375 480 370L605 355Q625 350 620 325",
      "M770 580L805 560L840 580L825 620L785 622ZM775 485L785 510L808 522L835 510L842 485M725 540L742 525L740 570L722 600M870 545L880 530L895 535L905 580L890 590L875 570ZM740 630L770 640L765 650M850 655L865 640L890 630M830 485L910 460Q880 500 895 505L985 485Q920 530 920 545Q920 575 975 565Q930 610 905 612",
      "M1125 565L1145 555L1155 540L1165 552L1185 540L1198 575Q1190 590 1145 602ZM960 658L962 630Q1020 625 1100 645L1130 658M965 640L1090 658M1230 640L1215 645L1222 690Q1190 700 1200 730Q1220 750 1210 770Q1195 790 1215 815",
      "M637 60Q640 95 655 110M670 70Q690 110 740 95M850 55Q890 65 880 85Q870 110 820 108L835 75Q860 70 858 80L830 108M455 110Q470 90 500 100Q560 80 570 110M160 45V112M240 45L235 110M55 45L60 72L0 85M60 72L70 110",
      "M300 0Q340 20 390 0M1010 110Q1015 75 1050 68Q1035 100 1070 110M1230 120Q1180 160 1180 215Q1195 230 1230 225M1230 150Q1205 165 1215 185M1200 175L1210 185L1198 220M1230 330H1215L1208 340M1205 370Q1195 440 1230 450M1185 450Q1195 440 1190 460L1230 500M1185 450Q1170 500 1230 530M0 720Q10 720 8 760L0 770",
      "M0 880Q60 870 100 895M240 895L250 868M290 900L275 868M335 868L345 900M395 900L410 870L440 885M610 895Q620 865 650 868M660 900Q690 880 680 868M755 868V890L800 885M845 900L870 875L910 890M1000 895L1035 880L1040 900",
    ],
  },
];

const Wallpaper = () => (
  <svg
    className="absolute inset-0 h-full w-full"
    viewBox="0 0 815 1200"
    preserveAspectRatio="xMidYMin slice"
    fill="none"
    stroke="#22282c"
    strokeWidth="5"
    strokeLinecap="round"
    strokeLinejoin="round"
    aria-hidden="true"
  >
    {TILES.map((tile, i) => (
      <g key={i} transform={`translate(${tile.x} ${tile.y}) scale(0.3333)`}>
        {tile.circles.map(([cx, cy, r], k) => (
          <circle key={k} cx={cx} cy={cy} r={r} />
        ))}
        {tile.paths.map((d, k) => (
          <path key={k} d={d} />
        ))}
        {tile.uses.map(([name, x, y, turn], k) => (
          <path key={k} d={SHAPES[name]} transform={`translate(${x} ${y}) rotate(${turn})`} />
        ))}
      </g>
    ))}
  </svg>
);

const Cat = ({ id, className }) => (
  <svg viewBox="32 42 264 270" className={className} role="img" aria-label="kucing">
    <defs>
      <radialGradient id={`${id}-face`} cx="50%" cy="48%" r="56%">
        <stop offset="0" stopColor="#ffe27a" />
        <stop offset="0.5" stopColor="#ffd54c" />
        <stop offset="0.82" stopColor="#fcb531" />
        <stop offset="1" stopColor="#e0851a" />
      </radialGradient>
      <linearGradient id={`${id}-ear`} x1="0" y1="0" x2="0" y2="1">
        <stop offset="0" stopColor="#6e4434" />
        <stop offset="1" stopColor="#b06e58" />
      </linearGradient>
      <radialGradient id={`${id}-cheek`}>
        <stop offset="0" stopColor="#fff3cf" stopOpacity="0.9" />
        <stop offset="1" stopColor="#fff3cf" stopOpacity="0" />
      </radialGradient>
    </defs>
    {/* ears */}
    <path d="M46 155Q42 90 49 52Q56 38 68 44Q98 60 128 88L90 150Z" fill="#e69a35" />
    <path d="M282 155Q286 90 278 50Q272 38 260 44Q230 60 202 88L240 150Z" fill="#e69a35" />
    <path d="M53 135Q48 80 56 52Q86 62 116 88L76 130Z" fill={`url(#${id}-ear)`} />
    <path d="M275 135Q279 80 272 52Q244 62 214 88L252 130Z" fill={`url(#${id}-ear)`} />
    {/* face */}
    <path
      d="M164 76C212 76 256 98 271 140C280 160 289 185 289 212C286 275 228 309 163 309C98 309 42 275 38 212C38 185 46 160 55 140C72 98 114 76 164 76Z"
      fill={`url(#${id}-face)`}
    />
    <circle cx="134" cy="226" r="34" fill={`url(#${id}-cheek)`} />
    <circle cx="194" cy="226" r="34" fill={`url(#${id}-cheek)`} />
    {/* eyes */}
    <ellipse cx="119" cy="175" rx="17" ry="19" fill="#6a4c12" />
    <ellipse cx="206" cy="175" rx="17" ry="19" fill="#6a4c12" />
    <circle cx="120" cy="171" r="7" fill="#b39c68" />
    <circle cx="206" cy="171" r="7" fill="#b39c68" />
    <g fill="none" stroke="#5a3b05" strokeLinecap="round">
      <path d="M68 148Q104 140 134 160" strokeWidth="8" />
      <path d="M256 148Q220 140 192 160" strokeWidth="8" />
      <path d="M165 215V252" strokeWidth="6" />
      <path d="M104 256Q165 268 200 257Q226 250 227 231" strokeWidth="10" />
      <path d="M34 196Q74 196 102 206M32 224Q72 211 104 214M296 196Q256 196 226 206M296 224Q256 211 224 214M38 210H102M292 210H226" strokeWidth="3" />
    </g>
    <path d="M143 194Q162 182 182 194Q180 212 163 220Q145 212 143 194Z" fill="#dd6a9c" />
  </svg>
);

const Pray = ({ className }) => (
  <svg viewBox="0 0 36 46" className={className} role="img" aria-label="terima kasih">
    <path d="M13 1Q17 -1 17.500 3V36Q13 42 7 40Q6 34 9 26Q10 10 13 1Z" fill="#f3d3c4" />
    <path d="M23 1Q19 -1 18.500 3V36Q23 42 29 40Q30 34 27 26Q26 10 23 1Z" fill="#edc6b5" />
    <path d="M18 3V35" stroke="#a5705f" strokeWidth="1.200" />
    <path d="M13 6Q15 4 17 7M23 6Q21 4 19 7M12 36Q15 30 17 26M24 36Q21 30 19 26" stroke="#c99582" strokeWidth="1" fill="none" />
    <path d="M1 33Q4 31 7 32Q8 38 11 42Q9 46 4 45Q0 40 1 33Z" fill="#22a799" />
    <path d="M35 33Q32 31 29 32Q28 38 25 42Q27 46 32 45Q36 40 35 33Z" fill="#22a799" />
  </svg>
);

const ViewOnceIcon = ({ digit }) => (
  <svg viewBox="0 0 46 46" className="h-[46px] w-[46px] shrink-0" aria-hidden="true">
    <path d="M24 4A19 19 0 0 0 24 42" fill="none" stroke="currentColor" strokeWidth="5" strokeLinecap="round" />
    {[[33, 6], [40, 13], [43, 23], [40, 33], [33, 40]].map(([cx, cy]) => (
      <circle key={cy} cx={cx} cy={cy} r="2.700" fill="currentColor" />
    ))}
    {digit && (
      <text x="22" y="31" textAnchor="middle" fontSize="23" fontWeight="500" fill="currentColor">
        {digit}
      </text>
    )}
  </svg>
);

const Ticks = () => (
  <svg viewBox="0 0 36 22" className="h-[22px] w-9" fill="none" stroke="currentColor" strokeWidth="3" aria-label="terkirim">
    <path d="M1 11L9 19L23 1" />
    <path d="M16 16L19 19L34 1" />
  </svg>
);

const Tail = ({ out }) =>
  out ? (
    <svg viewBox="0 0 16 22" className="absolute top-0 -right-[15px] h-[22px] w-4" aria-hidden="true">
      <path d="M0 0H14Q17 1 15 4L1 20V22H0Z" fill="#144d37" />
    </svg>
  ) : (
    <svg viewBox="0 0 16 22" className="absolute top-0 -left-[15px] h-[22px] w-4" aria-hidden="true">
      <path d="M16 0H2Q-1 1 1 4Q8 11 13 18L15 22H16Z" fill="#20272b" />
    </svg>
  );

const Time = ({ value, out }) => (
  <div
    className={
      out
        ? "ml-auto flex items-center gap-2 pb-2 text-[25px] leading-[30px] text-[#93b5a6]"
        : "ml-auto pb-[5px] text-[25px] leading-[30px] text-[#989da0]"
    }
  >
    <time>{value}</time>
    {out && <Ticks />}
  </div>
);

const Bubble = ({ out, tail, className = "", children }) => (
  <div
    className={`relative flex w-fit rounded-[26px] ${
      out ? "self-end bg-[#144d37] pr-4 pl-[22px]" : "bg-[#20272b] pr-[18px] pl-[22px]"
    } ${tail ? (out ? "rounded-tr-none" : "rounded-tl-none") : ""} ${className}`}
  >
    {tail && <Tail out={out} />}
    {children}
  </div>
);

const Message = ({ text, time, out, tail }) => (
  <Bubble out={out} tail={tail} className={out ? "items-end gap-[18px]" : "items-end gap-[30px]"}>
    <p className="pt-3 pb-[17px]">{text}</p>
    <Time value={time} out={out} />
  </Bubble>
);

export default function App() {
  return (
    <div className="relative min-h-screen overflow-hidden bg-[#0b1014]">
      <Wallpaper />
      <main className="relative flex flex-col gap-[22px] pr-9 pb-[11px] pl-[37px] font-[Roboto,sans-serif] text-[34px] leading-10 text-[#f4f7f8]">
        <div className="flex flex-col gap-[6px]">
          <Bubble className="items-end gap-8">
            <p className="flex items-center pt-5 pb-6">
              Pak, dibantu dang tpe tas
              <Pray className="-my-1 ml-3 h-[46px] w-9" />
              <Cat id="cat-a" className="-my-1 ml-2 h-[46px] w-[46px]" />
            </p>
            <Time value="16.51" />
          </Bubble>
          <Message text="Kal smo trun" time="16.51" />
        </div>

        <Message out tail text="siapa ya" time="16.51" />
        <Message tail text="Kontol" time="16.53" />

        {/* foto sekali lihat */}
        <Bubble out tail className="w-[399px]! items-end pr-[13px]! pl-[10px]!">
          <div className="flex items-center gap-3 pt-[13px] pb-4 text-[#84a597]">
            <ViewOnceIcon digit="1" />
            <span>Foto</span>
          </div>
          <Time value="16.56" out />
        </Bubble>

        <Message tail text="Makase so bantu orang susah" time="16.56" />

        {/* stiker emoji */}
        <div className="-mb-1 flex w-fit flex-col gap-[13px] pt-2 pl-1">
          <Cat id="cat-b" className="h-[90px] w-[88px]" />
          <time className="w-fit rounded-[26px] bg-[#20272b] px-[17px] pt-4 pb-[11px] text-[25px] leading-[30px] text-[#989da0]">
            16.56
          </time>
        </div>

        <Bubble tail className="w-[417px]! flex-col pr-[18px]!">
          <blockquote className="mt-2 -mr-[11px] -ml-[15px] flex h-[101px] overflow-hidden rounded-[14px] bg-[#1d2329]">
            <div className="w-[9px] shrink-0 bg-[#a58fff]" />
            <div className="flex flex-col pl-[18px]">
              <div className="flex h-[53px] items-center gap-2">
                <strong className="pt-3 text-[30px] leading-9 font-medium text-[#d9d0ff]">Memeg</strong>
                <div className="h-[53px] w-[202px] rounded-b-lg border-b-4 border-[#53555f] bg-[#6b6b6b]" />
              </div>
              <Cat id="cat-c" className="mt-1 h-8 w-8" />
            </div>
          </blockquote>
          <div className="flex items-end">
            <p className="pt-[14px] pb-[15px]">Salam kicau mania</p>
            <Time value="16.56" />
          </div>
        </Bubble>

        <Message out tail text="pap memek dulu" time="16.57" />

        <Bubble tail className="w-[369px]! items-end pr-[13px]! pl-[10px]!">
          <div className="flex items-center gap-3 pt-[10px] pb-[14px] text-[#a0a5a8]">
            <ViewOnceIcon />
            <em>Dibuka</em>
          </div>
          <Time value="16.57" />
        </Bubble>

        <Message out tail text="memek hitam" time="16.59" />
      </main>
    </div>
  );
}
